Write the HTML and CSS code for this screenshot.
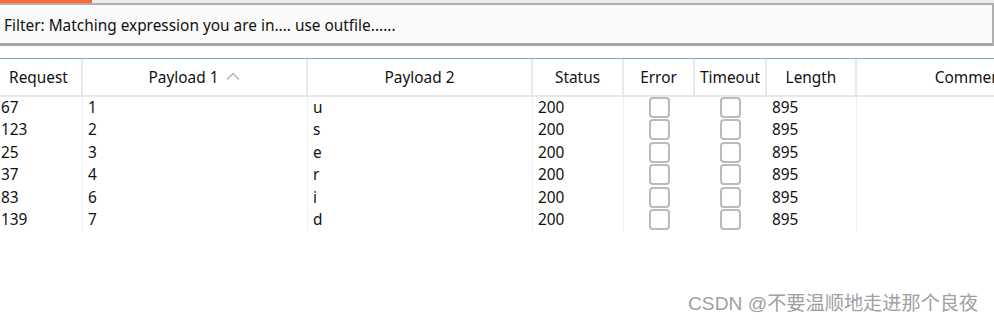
FILE: index.html
```html
<!DOCTYPE html>
<html>
<head>
<meta charset="utf-8">
<link rel="stylesheet" href="styles.css">
</head>
<body>
<div class="page">
  <div class="tabs">
    <div class="tab-active"></div>
    <div class="tab-rest"></div>
  </div>
  <div class="filter">Filter: Matching expression you are in.... use outfile......</div>
  <div class="table-wrap">
    <div class="table">
      <div class="hrow">
        <div class="hcell">Request</div>
        <div class="hcell">Payload 1 <svg class="sort" width="14" height="8" viewBox="0 0 14 8"><path d="M1 7.5 L7 1.5 L13 7.5" fill="none" stroke="#b5b5b5" stroke-width="1.5"/></svg></div>
        <div class="hcell">Payload 2</div>
        <div class="hcell">Status</div>
        <div class="hcell">Error</div>
        <div class="hcell">Timeout</div>
        <div class="hcell">Length</div>
        <div class="hcell">Comment</div>
      </div>
      <div class="body">
        <div class="row"><div class="cell">67</div><div class="cell">1</div><div class="cell">u</div><div class="cell">200</div><div class="cell c"><span class="cb"></span></div><div class="cell c"><span class="cb"></span></div><div class="cell">895</div><div class="cell"></div></div>
        <div class="row"><div class="cell">123</div><div class="cell">2</div><div class="cell">s</div><div class="cell">200</div><div class="cell c"><span class="cb"></span></div><div class="cell c"><span class="cb"></span></div><div class="cell">895</div><div class="cell"></div></div>
        <div class="row"><div class="cell">25</div><div class="cell">3</div><div class="cell">e</div><div class="cell">200</div><div class="cell c"><span class="cb"></span></div><div class="cell c"><span class="cb"></span></div><div class="cell">895</div><div class="cell"></div></div>
        <div class="row"><div class="cell">37</div><div class="cell">4</div><div class="cell">r</div><div class="cell">200</div><div class="cell c"><span class="cb"></span></div><div class="cell c"><span class="cb"></span></div><div class="cell">895</div><div class="cell"></div></div>
        <div class="row"><div class="cell">83</div><div class="cell">6</div><div class="cell">i</div><div class="cell">200</div><div class="cell c"><span class="cb"></span></div><div class="cell c"><span class="cb"></span></div><div class="cell">895</div><div class="cell"></div></div>
        <div class="row"><div class="cell">139</div><div class="cell">7</div><div class="cell">d</div><div class="cell">200</div><div class="cell c"><span class="cb"></span></div><div class="cell c"><span class="cb"></span></div><div class="cell">895</div><div class="cell"></div></div>
      </div>
    </div>
  </div>
  <div class="watermark">CSDN @不要温顺地走进那个良夜</div>
</div>
</body>
</html>
```
FILE: styles.css
```css
* { box-sizing: border-box; }
html, body { margin: 0; padding: 0; background: #ffffff; }
body {
  width: 994px;
  height: 322px;
  overflow: hidden;
  font-family: "Noto Sans", "Open Sans", "Noto Sans CJK SC", sans-serif;
  font-size: 15.4px;
  color: #111;
}
.page { position: relative; width: 994px; height: 322px; overflow: hidden; }
.tabs { display: flex; height: 3px; }
.tab-active { width: 92px; height: 3px; background: #ff6633; }
.tab-rest { flex: 1; height: 3px; background: #ececec; }
.filter {
  width: 994px;
  height: 43px;
  border-top: 2px solid #b0b0b0;
  border-right: 2px solid #b0b0b0;
  border-bottom: 3px solid #a4a4a4;
  background: #fafafa;
  padding: 4px 0 0 4px;
  display: flex;
  align-items: center;
  line-height: 20px;
}
.table-wrap { margin-top: 12px; overflow: hidden; width: 994px; }
.table { margin-left: -4px; width: 1100px; }
.hrow, .row {
  display: grid;
  grid-template-columns: 87px 225px 225px 91px 71px 72px 90px 229px;
}
.hrow {
  border-top: 1px solid #7ba7d8;
  border-bottom: 2px solid #e9e9e9;
  height: 39px;
}
.hcell {
  display: flex;
  align-items: center;
  justify-content: center;
  border-right: 2px solid #e8e8e8;
  white-space: nowrap;
}
.sort { margin-left: 8px; margin-top: -2px; }
.row { height: 22.4px; }
.cell {
  padding-left: 5px;
  border-right: 1px solid #f0f0f0;
  line-height: 21px;
  white-space: nowrap;
}
.cell:nth-child(5), .cell:nth-child(6) { border-right-color: transparent; }
.cell.c { padding-left: 0; display: flex; justify-content: center; align-items: flex-start; }
.cb {
  display: block;
  width: 21px;
  height: 21px;
  border: 2px solid #bbbbbb;
  border-radius: 4px;
  background: #fff;
}
.watermark {
  position: absolute;
  left: 688px;
  top: 288px;
  font-family: "Liberation Sans", "Noto Sans CJK SC", sans-serif;
  font-size: 19.2px;
  color: #a0a0a0;
  white-space: nowrap;
}
```
